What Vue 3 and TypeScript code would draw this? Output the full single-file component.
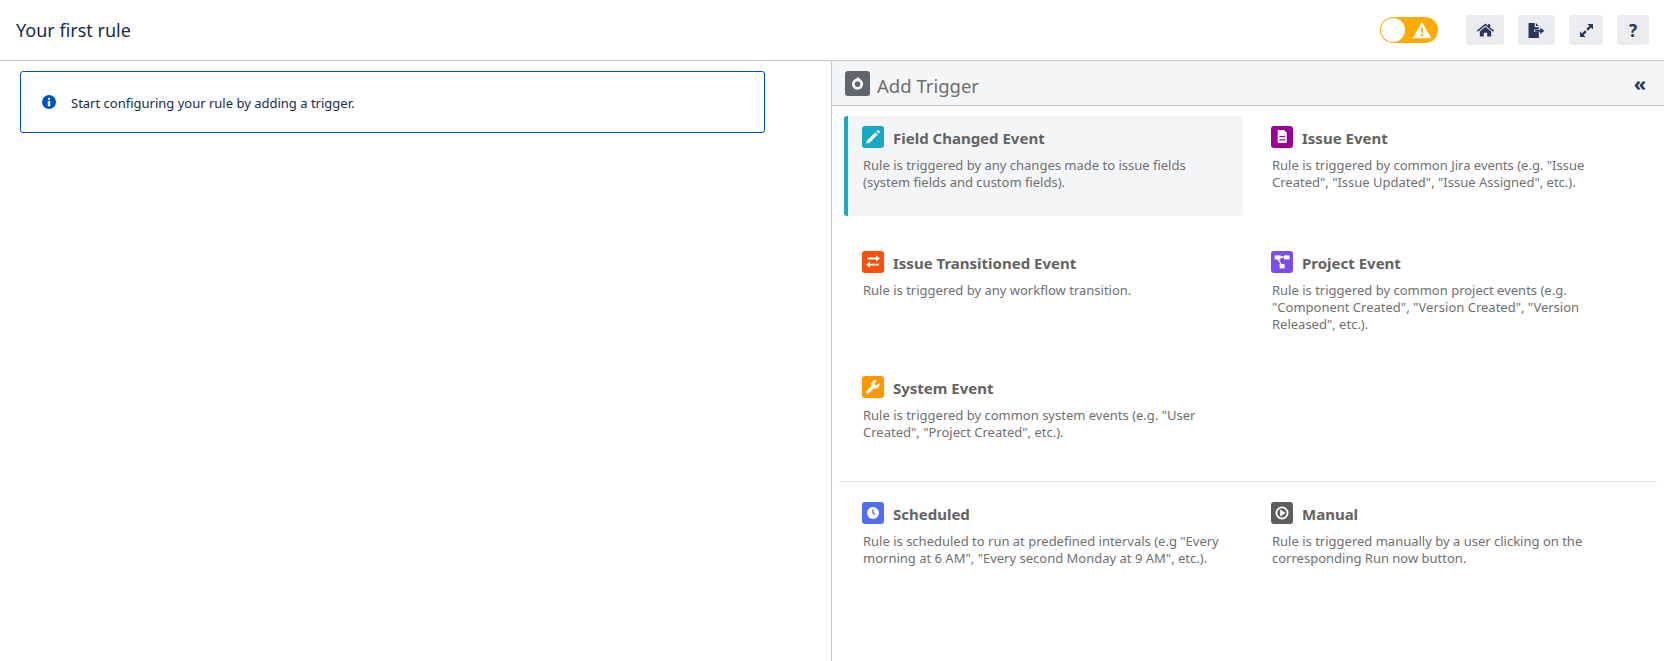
<script setup lang="ts">
// 触发器卡片数据
interface Trigger {
  title: string
  text: string
  color: string
  icon: string
  active?: boolean
}

const events: Trigger[] = [
  {
    title: 'Field Changed Event',
    text: 'Rule is triggered by any changes made to issue fields (system fields and custom fields).',
    color: '#17a9c4',
    icon: 'pencil',
    active: true
  },
  {
    title: 'Issue Event',
    text: 'Rule is triggered by common Jira events (e.g. "Issue Created", "Issue Updated", "Issue Assigned", etc.).',
    color: '#9c0095',
    icon: 'doc'
  },
  {
    title: 'Issue Transitioned Event',
    text: 'Rule is triggered by any workflow transition.',
    color: '#ff4d0a',
    icon: 'swap'
  },
  {
    title: 'Project Event',
    text: 'Rule is triggered by common project events (e.g. "Component Created", "Version Created", "Version Released", etc.).',
    color: '#7c4dee',
    icon: 'tree'
  },
  {
    title: 'System Event',
    text: 'Rule is triggered by common system events (e.g. "User Created", "Project Created", etc.).',
    color: '#ff9800',
    icon: 'wrench'
  }
]

const others: Trigger[] = [
  {
    title: 'Scheduled',
    text: 'Rule is scheduled to run at predefined intervals (e.g "Every morning at 6 AM", "Every second Monday at 9 AM", etc.).',
    color: '#4f6ef2',
    icon: 'clock'
  },
  {
    title: 'Manual',
    text: 'Rule is triggered manually by a user clicking on the corresponding Run now button.',
    color: '#5e5e5e',
    icon: 'play'
  }
]

const groups = [events, others]
</script>

<template>
  <div class="page">
    <!-- 顶部栏 -->
    <header class="topbar">
      <h1>Your first rule</h1>
      <div class="toggle">
        <span class="knob"></span>
        <svg viewBox="0 0 20 18" width="18" height="17">
          <path d="M10 1 L19.4 17 H.6 Z" fill="#fff" stroke="#fff" stroke-width="1.4" stroke-linejoin="round" />
          <rect x="9" y="6" width="2.2" height="5.6" rx="1" fill="#ffab00" />
          <circle cx="10.1" cy="14" r="1.3" fill="#ffab00" />
        </svg>
      </div>
      <div class="actions">
        <button class="btn home">
          <svg viewBox="0 0 18 14" width="17" height="14">
            <path d="M9 .2 L11.6 2.4 V1 H14 V4.4 L18 7.6 L17 8.8 L9 2.2 L1 8.8 L0 7.6 Z" fill="#253858" />
            <path d="M9 3.6 L15 8.6 V14 H10.8 V10 H7.2 V14 H3 V8.6 Z" fill="#253858" />
          </svg>
        </button>
        <button class="btn exit">
          <svg viewBox="0 0 17 16" width="17" height="15">
            <path d="M0 0 H6.6 V4.4 H11 V7 H6 V9.6 H11 V16 H0 Z" fill="#253858" />
            <path d="M7.8 0 L11 3.2 H7.8 Z" fill="#253858" />
            <path d="M7 7.4 H12.4 V5 L17 8.3 L12.4 11.6 V9.2 H7 Z" fill="#253858" />
          </svg>
        </button>
        <button class="btn expand">
          <svg viewBox="0 0 14 14" width="13" height="13">
            <path d="M8 0 H14 V6 L11.9 3.9 L8.6 7.2 L6.8 5.4 L10.1 2.1 Z" fill="#253858" />
            <path d="M6 14 H0 V8 L2.1 10.1 L5.4 6.8 L7.2 8.6 L3.9 11.9 Z" fill="#253858" />
          </svg>
        </button>
        <button class="btn help">?</button>
      </div>
    </header>

    <div class="body">
      <!-- 左侧：规则内容 -->
      <main class="left">
        <div class="notice">
          <svg viewBox="0 0 16 16" width="14" height="14">
            <circle cx="8" cy="8" r="8" fill="#0052cc" />
            <circle cx="8" cy="4.4" r="1.4" fill="#fff" />
            <rect x="6.6" y="6.8" width="2.8" height="6" rx=".6" fill="#fff" />
          </svg>
          <span class="notice-text">Start configuring your rule by adding a trigger.</span>
        </div>
      </main>

      <!-- 右侧：添加触发器 -->
      <aside class="right">
        <div class="panel-head">
          <span class="panel-icon">
            <svg viewBox="0 0 14 14" width="15" height="15">
              <circle cx="7" cy="7.6" r="3.9" fill="none" stroke="#fff" stroke-width="2.6" />
              <path d="M6.4 0.8 L10 3 L6.4 5 Z" fill="#fff" />
            </svg>
          </span>
          <span class="panel-title">Add Trigger</span>
          <span class="collapse">«</span>
        </div>

        <template v-for="(group, i) in groups" :key="i">
          <div v-if="i > 0" class="divider"></div>
          <div class="grid">
            <div v-for="t in group" :key="t.title" class="item" :class="{ active: t.active }">
              <div class="item-head">
                <span class="item-icon" :style="{ background: t.color }">
                  <svg viewBox="0 0 22 22" width="22" height="22">
                    <template v-if="t.icon === 'pencil'">
                      <path d="M5 14.6 L13.4 6.2 L15.8 8.6 L7.4 17 L4.4 17.6 Z" fill="#fff" />
                      <path d="M14.4 5.2 L15.4 4.2 Q16 3.7 16.6 4.2 L17.8 5.4 Q18.3 6 17.8 6.6 L16.8 7.6 Z" fill="#fff" />
                    </template>
                    <template v-else-if="t.icon === 'doc'">
                      <path d="M6.7 4 H13 L15.8 6.8 V16 Q15.8 17 14.8 17 H7.7 Q6.7 17 6.7 16 Z" fill="#fff" />
                      <rect x="8.4" y="10" width="5.6" height="1.2" :fill="t.color" />
                      <rect x="8.4" y="13.2" width="5.6" height="1.2" :fill="t.color" />
                    </template>
                    <template v-else-if="t.icon === 'swap'">
                      <path d="M5 8 H14 V5.6 L18 8.9 L14 12 V9.8 H5 Z" fill="#fff" transform="translate(0 -1.4)" />
                      <path d="M17 14 H8 V11.8 L4 15 L8 18.2 V15.8 H17 Z" fill="#fff" transform="translate(0 -1.2)" />
                    </template>
                    <template v-else-if="t.icon === 'tree'">
                      <rect x="3.6" y="4.4" width="6" height="4" fill="#fff" />
                      <rect x="13" y="4.4" width="5.6" height="4" fill="#fff" />
                      <rect x="8.6" y="13" width="5" height="4.4" fill="#fff" />
                      <path d="M6.5 6 H16 M6.5 7 L11 15" stroke="#fff" stroke-width="1.3" fill="none" />
                    </template>
                    <template v-else-if="t.icon === 'wrench'">
                      <path d="M17.6 6.8 L15 9.2 L13 8.8 L12.6 7 L15.2 4.4 A4.4 4.4 0 0 0 9.6 10 L4.2 15.4 Q3.6 16.6 4.6 17.4 Q5.6 18.2 6.6 17.6 L12 12.2 A4.4 4.4 0 0 0 17.6 6.8 Z" fill="#fff" />
                    </template>
                    <template v-else-if="t.icon === 'clock'">
                      <circle cx="11" cy="11" r="6" fill="#fff" />
                      <path d="M11 7.4 V11 L13 12.6" :stroke="t.color" stroke-width="1.4" fill="none" />
                    </template>
                    <template v-else>
                      <circle cx="11" cy="11" r="5.6" fill="none" stroke="#fff" stroke-width="1.8" />
                      <path d="M9.2 7.6 L14.6 11 L9.2 14.4 Z" fill="#fff" />
                    </template>
                  </svg>
                </span>
                <span class="item-title">{{ t.title }}</span>
              </div>
              <p>{{ t.text }}</p>
            </div>
          </div>
        </template>
      </aside>
    </div>
  </div>
</template>

<style>
html,
body {
  margin: 0;
  height: 100%;
  background: #fff;
}
</style>

<style scoped>
.page {
  height: 661px;
  display: flex;
  flex-direction: column;
  overflow: hidden;
  font-family: "Noto Sans", "Open Sans", sans-serif;
  color: #172b4d;
}

/* 顶部栏 */
.topbar {
  height: 61px;
  flex: none;
  box-sizing: border-box;
  border-bottom: 1px solid #c1c7d0;
  display: flex;
  align-items: center;
  padding: 0 15px 0 16px;
}

h1 {
  margin: 0;
  font-size: 18px;
  font-weight: 400;
  line-height: 28px;
  flex: 1;
  color: #172b4d;
}

.toggle {
  width: 58px;
  height: 26px;
  box-sizing: border-box;
  background: #ffab00;
  border-radius: 13px;
  display: flex;
  align-items: center;
  justify-content: space-between;
  padding: 0 7px 0 1px;
  margin-right: 28px;
}

.knob {
  width: 24px;
  height: 24px;
  background: #fff;
  border-radius: 50%;
}

.actions {
  display: flex;
  gap: 14px;
}

.btn {
  width: 37px;
  height: 30px;
  border: none;
  border-radius: 3px;
  background: #ebecf0;
  padding: 0;
  display: flex;
  align-items: center;
  justify-content: center;
  color: #253858;
  font-family: inherit;
}

.home {
  width: 38px;
}

.expand {
  width: 34px;
}

.help {
  font-size: 17px;
  font-weight: 700;
  width: 32px;
}

.body {
  flex: 1;
  display: flex;
  min-height: 0;
}

/* 左侧 */
.left {
  width: 832px;
  flex: none;
  box-sizing: border-box;
  padding: 10px 0 0 20px;
  border-right: 1px solid #c1c7d0;
}

.notice {
  width: 745px;
  height: 62px;
  box-sizing: border-box;
  border: 1px solid #0052cc;
  border-radius: 3px;
  display: flex;
  align-items: center;
  gap: 15px;
  padding-left: 21px;
  font-size: 13px;
  color: #172b4d;
}

.notice-text {
  padding-top: 2px;
}

/* 右侧 */
.right {
  flex: 1;
  min-width: 0;
}

.panel-head {
  height: 45px;
  box-sizing: border-box;
  background: #f4f5f7;
  border-bottom: 1px solid #c1c7d0;
  display: flex;
  align-items: center;
  padding: 0 18px 0 13px;
}

.panel-icon {
  width: 25px;
  height: 25px;
  background: #5f6670;
  border-radius: 3px;
  display: flex;
  align-items: center;
  justify-content: center;
  margin-right: 7px;
}

.panel-title {
  flex: 1;
  font-size: 18.5px;
  padding-top: 4px;
  color: #6e6e6e;
}

.collapse {
  font-size: 20px;
  font-weight: 700;
  line-height: 20px;
  padding-top: 2px;
  color: #253858;
}

.grid {
  display: grid;
  grid-template-columns: 399px 399px;
  gap: 25px 10px;
  padding: 10px 0 15px 12px;
}

.item {
  height: 100px;
  box-sizing: border-box;
  padding: 10px 14px 0 19px;
  border-radius: 3px;
}

.item.active {
  background: #f4f5f7;
  border-left: 4px solid #17a9c4;
  padding-left: 15px;
}

.item-head {
  margin-left: -1px;
  display: flex;
  align-items: center;
  gap: 9px;
  height: 22px;
}

.item-icon {
  width: 22px;
  height: 22px;
  border-radius: 3px;
  flex: none;
  display: block;
}

.item-icon svg {
  display: block;
}

.item-title {
  font-size: 15px;
  font-weight: 700;
  padding-top: 2px;
  color: #636363;
}

p {
  margin: 9px 0 0;
  font-size: 13px;
  line-height: 17px;
  color: #707070;
}

.divider {
  height: 1px;
  background: #dfe1e6;
  margin: 0 7px;
}
</style>
